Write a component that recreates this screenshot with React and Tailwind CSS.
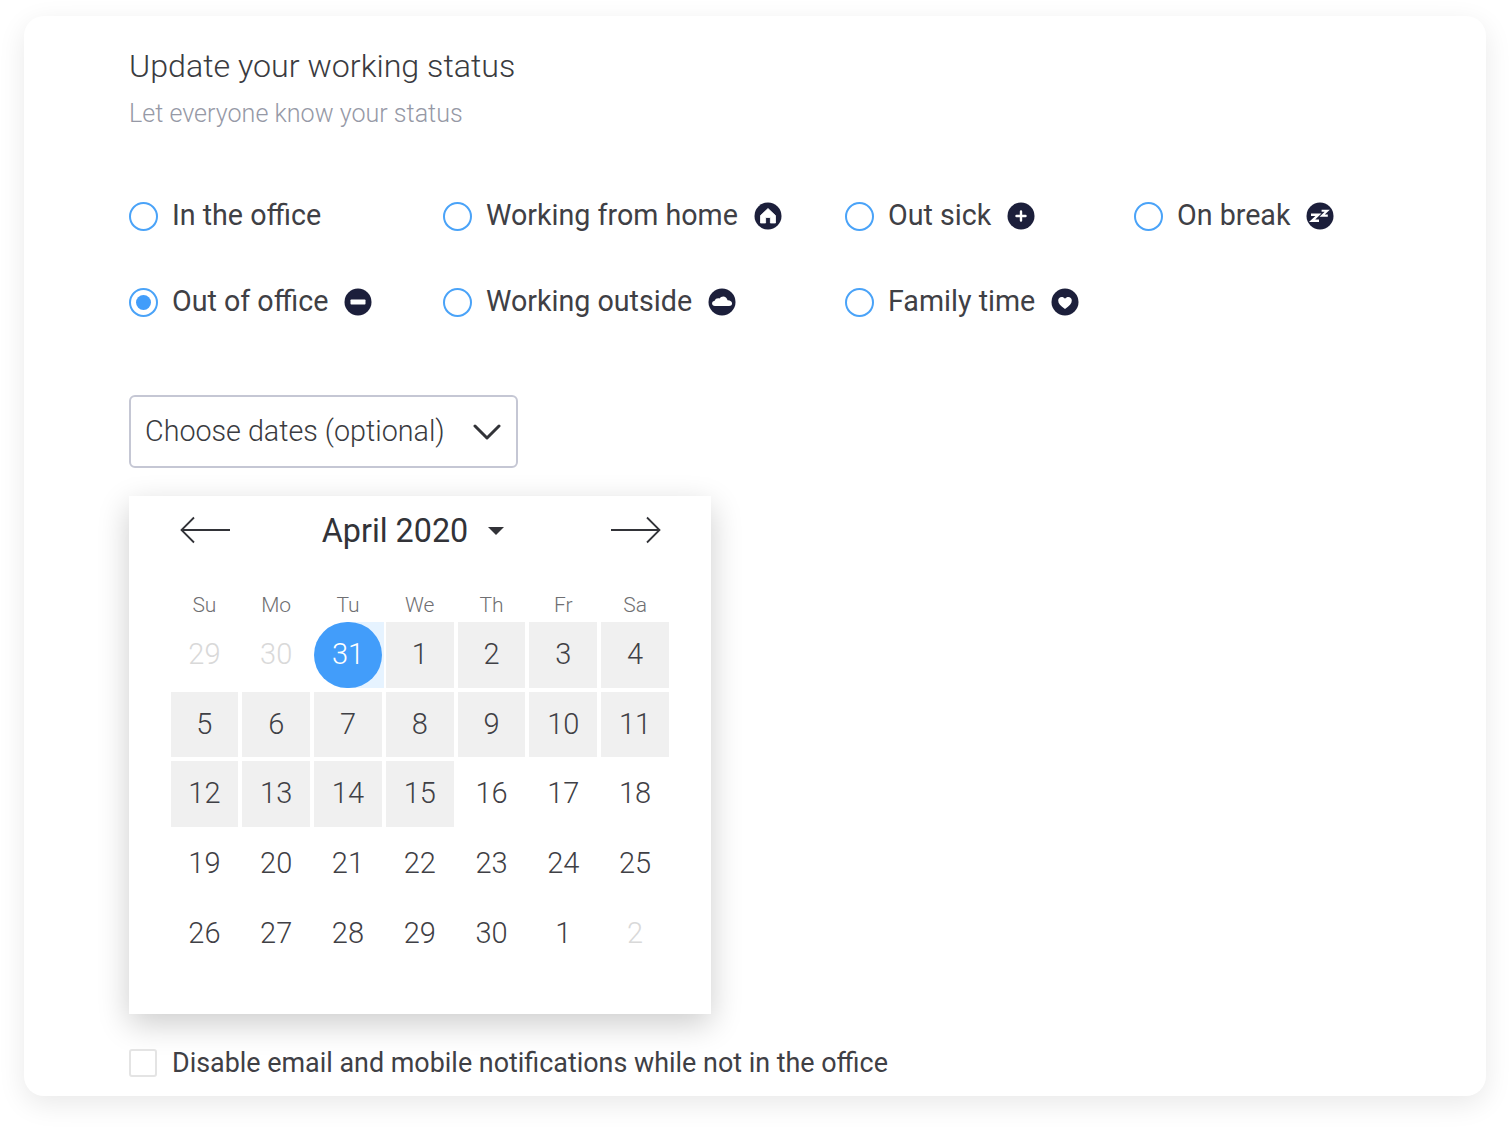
const statuses = [
  { label: 'In the office' },
  { label: 'Working from home', icon: 'home' },
  { label: 'Out sick', icon: 'plus' },
  { label: 'On break', icon: 'zzz' },
  { label: 'Out of office', icon: 'minus', checked: true },
  { label: 'Working outside', icon: 'cloud' },
  { label: 'Family time', icon: 'heart' },
];

const weekDays = ['Su', 'Mo', 'Tu', 'We', 'Th', 'Fr', 'Sa'];

// m = other month, s = selected start, r = in range
const days = [
  ['29', 'm'], ['30', 'm'], ['31', 's'], ['1', 'r'], ['2', 'r'], ['3', 'r'], ['4', 'r'],
  ['5', 'r'], ['6', 'r'], ['7', 'r'], ['8', 'r'], ['9', 'r'], ['10', 'r'], ['11', 'r'],
  ['12', 'r'], ['13', 'r'], ['14', 'r'], ['15', 'r'], ['16'], ['17'], ['18'],
  ['19'], ['20'], ['21'], ['22'], ['23'], ['24'], ['25'],
  ['26'], ['27'], ['28'], ['29'], ['30'], ['1'], ['2', 'm'],
];

function StatusIcon({ name }) {
  return (
    <svg width="28" height="28" viewBox="0 0 28 28" className="shrink-0">
      <circle cx="14" cy="14" r="13.5" fill="#1c1f3b" />
      {name === 'home' && (
        <path fillRule="evenodd" d="M14 6.5 L21.5 13.5 V21 H16.4 V15.5 H11.6 V21 H6.5 V13.5 Z" fill="#fff" stroke="#fff" strokeWidth="0.8" strokeLinejoin="round" />
      )}
      {name === 'plus' && (
        <path d="M14 9.5 V18.5 M9.5 14 H18.5" stroke="#fff" strokeWidth="2.4" strokeLinecap="round" />
      )}
      {name === 'minus' && <rect x="6.5" y="11.5" width="15" height="5" rx="0.8" fill="#fff" />}
      {name === 'cloud' && (
        <path d="M7 18 C3.4 18 3 13.4 6.6 12.8 C7.4 10.4 10 9.8 11.4 10.6 C13.6 7.2 18.6 7.8 19.6 12.2 C25 12 25.6 18 21 18 Z" fill="#fff" />
      )}
      {name === 'heart' && (
        <path d="M14 21 C9.5 17.6 7.2 15.4 7.2 12.4 C7.2 8.6 12 7.6 14 10.8 C16 7.6 20.8 8.6 20.8 12.4 C20.8 15.4 18.5 17.6 14 21 Z" fill="#fff" />
      )}
      {name === 'zzz' && (
        <g fill="none" stroke="#fff" strokeLinejoin="miter">
          <path d="M5 12.8 H12.4 L6 18.8 H13" strokeWidth="2.4" />
          <path d="M15.6 8.8 H21.2 L16.2 13.6 H21.8" strokeWidth="2.1" />
        </g>
      )}
    </svg>
  );
}

function Radio({ checked }) {
  return (
    <span className="mt-[1px] flex h-[29px] w-[29px] shrink-0 items-center justify-center rounded-full border-2 border-[#4aa3f8] bg-white">
      {checked && <span className="h-[15px] w-[15px] rounded-full bg-[#429dfa]" />}
    </span>
  );
}

function Day({ value, kind }) {
  if (kind === 's') {
    return (
      <div className="-mr-[2px] flex h-[65.7px] items-center bg-[linear-gradient(90deg,#ffffff_50%,#e6f3ff_50%)]">
        <span className="flex h-[65.7px] w-[68px] items-center justify-center rounded-full bg-[#429dfa] text-white">{value}</span>
      </div>
    );
  }
  let color = 'text-[#3f4045]';
  if (kind === 'm') color = 'text-[#d9d9d9]';
  return (
    <div className={`flex h-[65.7px] items-center justify-center ${color} ${kind === 'r' ? 'bg-[#f0f0f0]' : ''}`}>{value}</div>
  );
}

export default function App() {
  return (
    <div className="h-[1128px] w-[1510px] overflow-hidden bg-white pt-4 pl-6 font-['Roboto',sans-serif]">
      <div className="h-[1080px] w-[1462px] rounded-[20px] bg-white pl-[105px] shadow-[0_8px_28px_rgba(0,0,0,0.09)]">
        <h1 className="pt-[30px] text-[32.2px] leading-[40px] font-light text-[#3a3b40]">Update your working status</h1>
        <p className="mt-[12px] text-[25.1px] leading-[32px] font-light text-[#9699a6]">Let everyone know your status</p>

        <div className="mt-[64px] grid grid-cols-[314px_402px_289px_auto] gap-y-[42px]">
          {statuses.map((s) => (
            <label key={s.label} className="flex h-11 items-center text-[28.65px] text-[#3f4045]">
              <Radio checked={s.checked} />
              <span className="mb-[2px] ml-[14px] leading-none">{s.label}</span>
              {s.icon && <span className="ml-4"><StatusIcon name={s.icon} /></span>}
            </label>
          ))}
        </div>

        <button className="mt-[71px] flex h-[73px] w-[389px] items-center justify-between rounded-md border-2 border-[#c5c7d4] pr-[15px] pl-[14px] text-[28.7px] font-light text-[#3a3b40]">
          Choose dates (optional)
          <svg width="28" height="16" viewBox="0 0 28 16" fill="none" stroke="#323338" strokeWidth="3" strokeLinecap="round" strokeLinejoin="round">
            <path d="M2 2 L14 14 L26 2" />
          </svg>
        </button>

        <div className="mt-[28px] h-[518px] w-[582px] bg-white shadow-[0_10px_30px_rgba(0,0,0,0.2)]">
          <div className="flex h-[70px] items-center justify-between pr-[50px] pl-[51px]">
            <svg width="51" height="30" viewBox="0 0 51 30" fill="none" stroke="#323338" strokeWidth="1.8">
              <path d="M50 14 H2 M14 1.5 L1.5 14 L14 26.5" />
            </svg>
            <div className="mr-[15px] flex items-center text-[32.3px] text-[#323338]">
              April 2020
              <span className="ml-[20px] h-0 w-0 border-x-[8px] border-t-[8px] border-x-transparent border-t-[#323338]" />
            </div>
            <svg width="51" height="30" viewBox="0 0 51 30" fill="none" stroke="#323338" strokeWidth="1.8">
              <path d="M1 14 H49 M37 1.5 L49.5 14 L37 26.5" />
            </svg>
          </div>

          <div className="ml-[41.5px] w-[498.5px]">
            <div className="mt-[22px] grid grid-cols-7 gap-x-1 text-center text-[21px] leading-[34px] font-light text-[#6f6f72]">
              {weekDays.map((d) => (
                <div key={d}>{d}</div>
              ))}
            </div>
            <div className="grid grid-cols-7 gap-x-1 gap-y-1 text-[29px] font-light">
              {days.map(([value, kind], i) => (
                <Day key={i} value={value} kind={kind} />
              ))}
            </div>
          </div>
        </div>

        <label className="mt-[35px] flex items-center text-[26.9px] leading-[28px] text-[#3f4045]">
          <span className="h-7 w-7 shrink-0 rounded-[3px] border-2 border-[#e4e4e4] bg-white" />
          <span className="ml-[15px]">Disable email and mobile notifications while not in the office</span>
        </label>
      </div>
    </div>
  );
}
